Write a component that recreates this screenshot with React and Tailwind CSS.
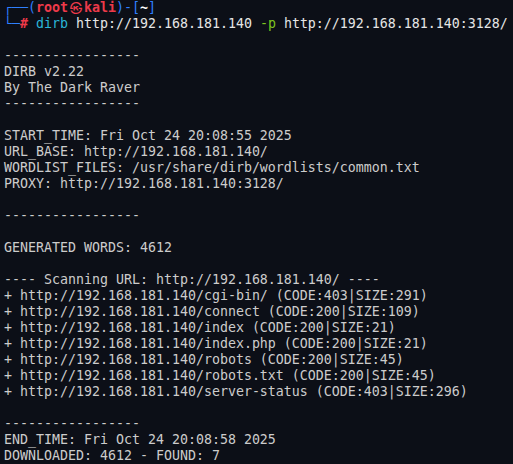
import React from 'react';

const urls = [
  ['cgi-bin/', '403', '291'],
  ['connect', '200', '109'],
  ['index', '200', '21'],
  ['index.php', '200', '21'],
  ['robots', '200', '45'],
  ['robots.txt', '200', '45'],
  ['server-status', '403', '296'],
];

const dash = '-----------------';

const lines = [
  '',
  dash,
  'DIRB v2.22',
  'By The Dark Raver',
  dash,
  '',
  'START_TIME: Fri Oct 24 20:08:55 2025',
  'URL_BASE: http://192.168.181.140/',
  'WORDLIST_FILES: /usr/share/dirb/wordlists/common.txt',
  'PROXY: http://192.168.181.140:3128/',
  '',
  dash,
  '',
  'GENERATED WORDS: 4612',
  '',
  '---- Scanning URL: http://192.168.181.140/ ----',
  ...urls.map(([p, c, s]) => `+ http://192.168.181.140/${p} (CODE:${c}|SIZE:${s})`),
  '',
  dash,
  'END_TIME: Fri Oct 24 20:08:58 2025',
  'DOWNLOADED: 4612 - FOUND: 7',
];

const Line = ({ children }) => (
  <div className="h-4 leading-4 whitespace-pre">{children || ' '}</div>
);

export default function App() {
  return (
    <div
      className="w-[513px] h-[464px] overflow-hidden bg-[#0c0f17] text-[#cccccc] pl-1 text-[13.29px]"
      style={{ fontFamily: '"DejaVu Sans Mono", "Liberation Mono", monospace' }}
    >
      {/* prompt */}
      <div className="h-4 leading-4 whitespace-pre flex">
        <span className="text-[#2f7fff]">┌──(</span>
        <span className="text-[#ee3a4a] font-bold">root</span>
        <span
          className="inline-block w-4 h-4 text-center text-[#ee3a4a] text-[12.5px] leading-4"
          style={{ fontFamily: '"Noto Sans CJK KR", "DejaVu Sans", sans-serif' }}
        >
          ㉿
        </span>
        <span className="text-[#ee3a4a] font-bold">kali</span>
        <span className="text-[#2f7fff]">)-[</span>
        <span className="text-white font-bold">~</span>
        <span className="text-[#2f7fff]">]</span>
      </div>
      <div className="h-4 leading-4 whitespace-pre">
        <span className="text-[#2f7fff]">└─</span>
        <span className="text-[#ee3a4a] font-bold">#</span>
        <span className="text-[#2ab4d8]"> dirb</span>
        <span className="text-[#e6e6e6]"> http://192.168.181.140 </span>
        <span className="text-[#7ec51f]">-p</span>
        <span className="text-[#e6e6e6]"> http://192.168.181.140:3128/</span>
      </div>
      {lines.map((l, i) => (
        <Line key={i}>{l}</Line>
      ))}
    </div>
  );
}
